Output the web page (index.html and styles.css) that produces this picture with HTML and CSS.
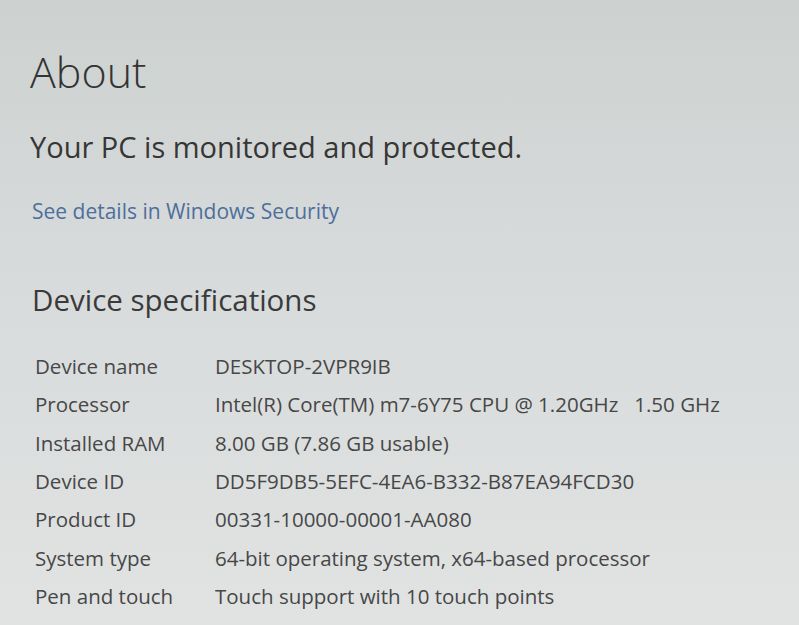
FILE: index.html
```html
<!DOCTYPE html>
<html lang="en">
<head>
    <meta charset="UTF-8">
    <meta name="viewport" content="width=device-width, initial-scale=1.0">
    <title>About</title>
    <link rel="stylesheet" href="styles.css">
</head>
<body>
    <div class="page">
        <h1 class="title">About</h1>
        <p class="status">Your PC is monitored and protected.</p>
        <a class="link" href="#">See details in Windows Security</a>

        <h2 class="section">Device specifications</h2>
        <div class="specs">
            <div class="label">Device name</div>
            <div class="value">DESKTOP-2VPR9IB</div>
            <div class="label">Processor</div>
            <div class="value">Intel(R) Core(TM) m7-6Y75 CPU @ 1.20GHz &nbsp; 1.50 GHz</div>
            <div class="label">Installed RAM</div>
            <div class="value">8.00 GB (7.86 GB usable)</div>
            <div class="label">Device ID</div>
            <div class="value">DD5F9DB5-5EFC-4EA6-B332-B87EA94FCD30</div>
            <div class="label">Product ID</div>
            <div class="value">00331-10000-00001-AA080</div>
            <div class="label">System type</div>
            <div class="value">64-bit operating system, x64-based processor</div>
            <div class="label">Pen and touch</div>
            <div class="value">Touch support with 10 touch points</div>
        </div>
    </div>
</body>
</html>
```

FILE: styles.css
```css
body {
    margin: 0;
    height: 625px;
    overflow: hidden;
    font-family: 'Open Sans', 'Noto Sans', sans-serif;
    color: #3b3b3b;
    background: linear-gradient(180deg, #cdd1d0 0%, #d8dbdb 45%, #e1e3e3 100%);
}

.page {
    padding: 44px 0 0 30px;
}

.title {
    margin: 0;
    font-size: 43px;
    font-weight: 300;
    line-height: 56px;
    color: #333;
}

.status {
    margin: 27px 0 0;
    font-size: 29px;
    font-weight: 400;
    line-height: 40px;
    color: #363636;
}

.link {
    display: inline-block;
    margin: 30px 0 0 2px;
    font-size: 21px;
    line-height: 28px;
    color: #4d6f9c;
    text-decoration: none;
}

.section {
    margin: 57px 0 0 2px;
    font-size: 29.5px;
    font-weight: 400;
    line-height: 36px;
    color: #3a3a3a;
}

.specs {
    display: grid;
    grid-template-columns: 180px auto;
    grid-auto-rows: 38.3px;
    align-items: center;
    margin: 29px 0 0 5px;
    font-size: 20.5px;
    color: #474747;
}
```
